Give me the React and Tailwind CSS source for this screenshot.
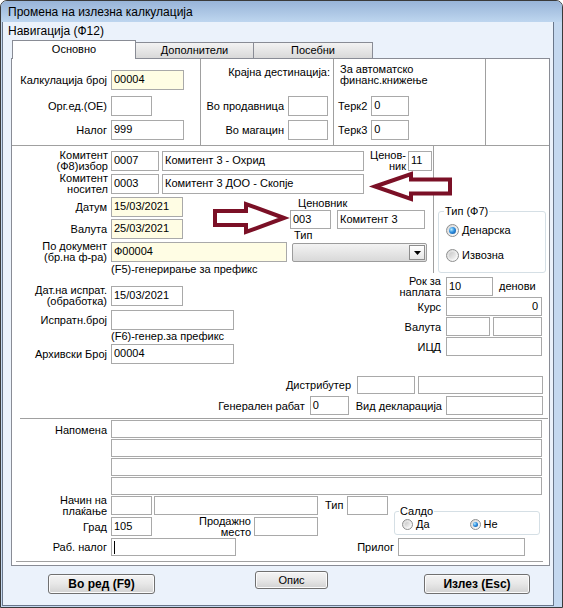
import React from "react";
import clsx from "clsx";

const Field = ({ className = "", yellow = false, right = false, children }) => (
  <div
    className={clsx(
      "shrink-0 overflow-hidden whitespace-nowrap border border-[#a9a9a9] leading-[16px]",
      yellow ? "bg-[#fffde4]" : "bg-white",
      right ? "pr-[3px] text-right" : "pl-[2px]",
      className
    )}
  >
    {children}
  </div>
);

const Label = ({ className = "", two = false, children }) => (
  <div className={clsx("shrink-0 text-right", two ? "leading-[11px] -my-[2px]" : "leading-[12px]", className)}>
    {children}
  </div>
);

const Radio = ({ checked = false, small = false }) => (
  <span
    className={clsx(
      "shrink-0 rounded-full border border-[#8e8f8f] bg-linear-to-br from-[#d6d6d6] to-[#ffffff] flex items-center justify-center",
      small ? "w-[11px] h-[11px]" : "w-[13px] h-[13px]"
    )}
  >
    {checked ? (
      <span
        className={clsx(
          "rounded-full bg-[radial-gradient(circle_at_35%_35%,#b6ecff_0%,#2f8fe0_45%,#0b4a92_100%)]",
          small ? "w-[5px] h-[5px]" : "w-[7px] h-[7px]"
        )}
      />
    ) : (
      <span
        className={clsx(
          "rounded-full bg-linear-to-br from-[#c8c8c8] to-[#f4f4f4]",
          small ? "w-[5px] h-[5px]" : "w-[7px] h-[7px]"
        )}
      />
    )}
  </span>
);

const Btn = ({ className = "", children }) => (
  <button
    className={clsx(
      "rounded-[3px] border border-[#707070] bg-linear-to-b from-[#f4f4f4] via-[#e7e7e7] to-[#d2d2d2] shadow-[inset_0_0_0_1px_#fbfbfb] flex items-center justify-center",
      className
    )}
  >
    {children}
  </button>
);

const Arrows = () => (
  <svg className="absolute left-0 top-0 pointer-events-none" width="537" height="506">
    <polygon
      points="363,127.5 399,115 399,120.5 438,120.5 438,134.5 399,134.5 399,140"
      fill="white"
      stroke="#7b1026"
      strokeWidth="4"
    />
    <polygon
      points="272,159 234,145 234,152 203,152 203,166 234,166 234,173"
      fill="white"
      stroke="#7b1026"
      strokeWidth="4"
    />
  </svg>
);

function TopSection() {
  return (
    <div className="flex h-[87px] border-b border-[#a0a0a0]">
      <div className="w-[189px] border-r border-[#a0a0a0] pt-[11px]">
        <div className="flex items-center">
          <Label className="w-[95px]">Калкулација број</Label>
          <Field className="ml-[4px] w-[73px] h-[20px]" yellow>00004</Field>
        </div>
        <div className="flex items-center mt-[6px]">
          <Label className="w-[95px]">Орг.ед.(ОЕ)</Label>
          <Field className="ml-[4px] w-[41px] h-[20px]" />
        </div>
        <div className="flex items-center mt-[4px]">
          <Label className="w-[95px]">Налог</Label>
          <Field className="ml-[4px] w-[73px] h-[20px]">999</Field>
        </div>
      </div>
      <div className="w-[133px] border-r border-[#a0a0a0]">
        <div className="text-right pr-[3px] pt-[7px] leading-[13px]">Крајна дестинација:</div>
        <div className="flex items-center justify-end pr-[5px] mt-[17px]">
          <Label>Во продавница</Label>
          <Field className="ml-[4px] w-[40px] h-[20px]" />
        </div>
        <div className="flex items-center justify-end pr-[5px] mt-[4px]">
          <Label>Во магацин</Label>
          <Field className="ml-[4px] w-[40px] h-[20px]" />
        </div>
      </div>
      <div className="w-[152px] border-r border-[#a0a0a0]">
        <div className="pl-[6px] pt-[5px] leading-[11px]">
          За автоматско
          <br />
          финанс.книжење
        </div>
        <div className="flex items-center pl-[4px] mt-[10px]">
          <Label>Терк2</Label>
          <Field className="ml-[4px] w-[38px] h-[20px]">0</Field>
        </div>
        <div className="flex items-center pl-[4px] mt-[4px]">
          <Label>Терк3</Label>
          <Field className="ml-[4px] w-[38px] h-[20px]">0</Field>
        </div>
      </div>
    </div>
  );
}

function ClientSection() {
  return (
    <div className="flex h-[127px]">
      <div className="w-[422px] border-r border-[#a0a0a0] pt-[5px]">
        <div className="flex items-center">
          <Label className="w-[96px]" two>
            Комитент
            <br />
            (Ф8)избор
          </Label>
          <Field className="ml-[3px] w-[48px] h-[20px]">0007</Field>
          <Field className="ml-[3px] w-[202px] h-[20px]">Комитент 3 - Охрид</Field>
          <Label className="w-[42px]" two>
            Ценов-
            <br />
            ник
          </Label>
          <Field className="ml-[2px] w-[24px] h-[20px]">11</Field>
        </div>
        <div className="flex items-center mt-[3px]">
          <Label className="w-[96px]" two>
            Комитент
            <br />
            носител
          </Label>
          <Field className="ml-[3px] w-[48px] h-[20px]">0003</Field>
          <Field className="ml-[3px] w-[202px] h-[20px]">Комитент 3 ДОО - Скопје</Field>
        </div>
        <div className="flex mt-[3px]">
          <div className="w-[277px]">
            <div className="flex items-center">
              <Label className="w-[95px]">Датум</Label>
              <Field className="ml-[4px] w-[72px] h-[20px]" yellow>15/03/2021</Field>
            </div>
            <div className="flex items-center mt-[2px]">
              <Label className="w-[95px]">Валута</Label>
              <Field className="ml-[4px] w-[72px] h-[20px]" yellow>25/03/2021</Field>
            </div>
            <div className="flex items-center mt-[3px]">
              <Label className="w-[95px]" two>
                По документ
                <br />
                (бр.на ф-ра)
              </Label>
              <Field className="ml-[4px] w-[176px] h-[20px]" yellow>Ф00004</Field>
            </div>
            <div className="pl-[99px] leading-[12px] mt-[1px]">(F5)-генерирање за префикс</div>
          </div>
          <div className="flex-1">
            <div className="pl-[9px] leading-[13px]">Ценовник</div>
            <div className="flex">
              <Field className="ml-[1px] w-[41px] h-[19px]">003</Field>
              <Field className="ml-[6px] w-[88px] h-[19px]">Комитент 3</Field>
            </div>
            <div className="pl-[5px] leading-[13px]">Тип</div>
            <div className="ml-[3px] mt-[1px] w-[135px] h-[19px] rounded-[2px] border border-[#9c9c9c] bg-linear-to-b from-[#f3f3f3] to-[#d9d9d9] flex items-center justify-end pr-[1px]">
              <div className="w-[16px] h-[15px] border border-[#8d8d8d] bg-linear-to-b from-[#ffffff] to-[#e6e6e6] flex items-center justify-center">
                <svg width="7" height="4" viewBox="0 0 7 4">
                  <polygon points="0,0 7,0 3.5,4" fill="#000" />
                </svg>
              </div>
            </div>
          </div>
        </div>
      </div>
      <div className="flex-1">
        <fieldset className="ml-[4px] mt-[59px] w-[108px] h-[68px] rounded-[3px] border border-[#d5dfe5]">
          <legend className="ml-[5px] px-[1px] leading-[13px]">Тип (Ф7)</legend>
          <div className="flex items-center pl-[7px] mt-[6px]">
            <Radio checked />
            <span className="ml-[3px] leading-[13px]">Денарска</span>
          </div>
          <div className="flex items-center pl-[7px] mt-[12px]">
            <Radio />
            <span className="ml-[3px] leading-[13px]">Извозна</span>
          </div>
        </fieldset>
      </div>
    </div>
  );
}

function ShippingSection() {
  return (
    <>
      <div className="flex h-[100px]">
        <div className="w-[240px] pt-[13px]">
          <div className="flex items-center">
            <Label className="w-[95px]" two>
              Дат.на испрат.
              <br />
              (обработка)
            </Label>
            <Field className="ml-[4px] w-[72px] h-[20px]">15/03/2021</Field>
          </div>
          <div className="flex items-center mt-[4px]">
            <Label className="w-[95px]">Испратн.број</Label>
            <Field className="ml-[4px] w-[123px] h-[20px]" />
          </div>
          <div className="pl-[99px] leading-[12px]">(F6)-генер.за префикс</div>
          <div className="flex items-center mt-[2px]">
            <Label className="w-[95px]">Архивски Број</Label>
            <Field className="ml-[4px] w-[123px] h-[20px]">00004</Field>
          </div>
        </div>
        <div className="flex-1 pt-[4px]">
          <div className="flex items-center">
            <Label className="w-[189px]" two>
              Рок за
              <br />
              наплата
            </Label>
            <Field className="ml-[5px] w-[47px] h-[19px]">10</Field>
            <span className="ml-[6px]">денови</span>
          </div>
          <div className="flex items-center mt-[1px]">
            <Label className="w-[189px]">Курс</Label>
            <Field className="ml-[5px] w-[96px] h-[19px]" right>0</Field>
          </div>
          <div className="flex items-center mt-[1px]">
            <Label className="w-[189px]">Валута</Label>
            <Field className="ml-[5px] w-[44px] h-[19px]" />
            <Field className="ml-[3px] w-[49px] h-[19px]" />
          </div>
          <div className="flex items-center mt-[1px]">
            <Label className="w-[189px]">ИЦД</Label>
            <Field className="ml-[5px] w-[96px] h-[19px]" />
          </div>
        </div>
      </div>
      <div className="flex items-center justify-end pr-[6px] mt-[3px]">
        <Label>Дистрибутер</Label>
        <Field className="ml-[6px] w-[58px] h-[18px]" />
        <Field className="ml-[3px] w-[125px] h-[18px]" />
      </div>
      <div className="flex items-center justify-end pr-[6px] mt-[2px]">
        <Label>Генерален рабат</Label>
        <Field className="ml-[5px] w-[39px] h-[19px]">0</Field>
        <Label className="ml-[7px]">Вид декларација</Label>
        <Field className="ml-[4px] w-[97px] h-[19px]" />
      </div>
      <div className="ml-[8px] mr-[1px] mt-[3px] h-px bg-[#a0a0a0]" />
    </>
  );
}

function NotesSection() {
  return (
    <>
      <div className="flex mt-[1px]">
        <Label className="w-[95px] pt-[4px]">Напомена</Label>
        <div className="ml-[4px] flex flex-col gap-[1px]">
          <Field className="w-[431px] h-[18px]" />
          <Field className="w-[431px] h-[18px]" />
          <Field className="w-[431px] h-[18px]" />
          <Field className="w-[431px] h-[18px]" />
        </div>
      </div>
      <div className="flex mt-[1px]">
        <div className="w-[376px]">
          <div className="flex items-center">
            <Label className="w-[95px]" two>
              Начин на
              <br />
              плаќање
            </Label>
            <Field className="ml-[4px] w-[41px] h-[19px]" />
            <Field className="ml-[2px] w-[164px] h-[19px]" />
            <span className="ml-[7px]">Тип</span>
            <Field className="ml-[4px] w-[41px] h-[19px]" />
          </div>
          <div className="flex items-center mt-[2px]">
            <Label className="w-[95px]">Град</Label>
            <Field className="ml-[4px] w-[41px] h-[19px]">105</Field>
            <Label className="w-[99px]" two>
              Продажно
              <br />
              место
            </Label>
            <Field className="ml-[3px] w-[64px] h-[19px]" />
          </div>
        </div>
        <fieldset className="self-end ml-[6px] mb-[1px] w-[146px] h-[30px] rounded-[3px] border border-[#d5dfe5]">
          <legend className="ml-[4px] px-[1px] leading-[12px]">Салдо</legend>
          <div className="flex items-center pl-[7px] mt-[1px]">
            <Radio small />
            <span className="ml-[3px] leading-[12px]">Да</span>
            <span className="ml-[40px]">
              <Radio checked small />
            </span>
            <span className="ml-[3px] leading-[12px]">Не</span>
          </div>
        </fieldset>
      </div>
      <div className="flex items-center mt-[2px]">
        <Label className="w-[95px]">Раб. налог</Label>
        <Field className="ml-[4px] w-[125px] h-[18px] flex items-center">
          <span className="w-px h-[13px] bg-black" />
        </Field>
        <Label className="ml-[118px] w-[40px]">Прилог</Label>
        <Field className="ml-[4px] w-[127px] h-[18px]" />
      </div>
      <div className="ml-[4px] mr-[6px] mt-[5px] h-px bg-[#a0a0a0]" />
    </>
  );
}

export default function App() {
  return (
    <div className="w-[563px] h-[608px] overflow-hidden font-['Liberation_Sans',Arial,sans-serif] text-[11px] text-black">
      <div className="h-full flex flex-col border border-[#3a3a3a] rounded-t-[7px] bg-[#c4d8ef]">
        <div className="h-[21px] shrink-0 rounded-t-[6px] bg-linear-to-b from-[#98b4d8] to-[#bed6ef] pl-[7px] flex items-center text-[12px]">
          Промена на излезна калкулација
        </div>
        <div className="flex-1 ml-[1px] mr-[8px] mb-[1px] bg-[#ebf2fb] border border-t-0 border-[#69768a] flex flex-col">
          <div className="pl-[5px] pt-[2px] h-[16px] text-[12px] leading-[14px]">Навигација (Ф12)</div>
          <div className="relative z-10 flex items-end ml-[9px] mt-[2px] h-[18px]">
            <div className="-mb-px w-[124px] h-[19px] bg-white border border-b-0 border-[#898c95] flex items-center justify-center pb-[1px]">
              Основно
            </div>
            <div className="-ml-px w-[119px] h-[16px] border border-b-0 border-[#898c95] bg-linear-to-b from-[#f3f3f3] to-[#d9d9d9] flex items-center justify-center">
              Дополнители
            </div>
            <div className="-ml-px w-[120px] h-[16px] border border-b-0 border-[#898c95] bg-linear-to-b from-[#f3f3f3] to-[#d9d9d9] flex items-center justify-center">
              Посебни
            </div>
          </div>
          <div className="relative ml-[8px] w-[539px] h-[508px] shrink-0 overflow-hidden bg-white border border-[#898c95]">
            <TopSection />
            <ClientSection />
            <ShippingSection />
            <NotesSection />
            <Arrows />
          </div>
          <div className="flex items-start mt-[5px] text-[12px] font-bold">
            <Btn className="ml-[45px] mt-[3px] w-[107px] h-[20px]">Во ред (F9)</Btn>
            <Btn className="ml-[100px] w-[73px] h-[18px] font-normal text-[11px]">Опис</Btn>
            <Btn className="ml-[96px] mt-[3px] w-[106px] h-[20px]">Излез (Esc)</Btn>
          </div>
        </div>
      </div>
    </div>
  );
}
